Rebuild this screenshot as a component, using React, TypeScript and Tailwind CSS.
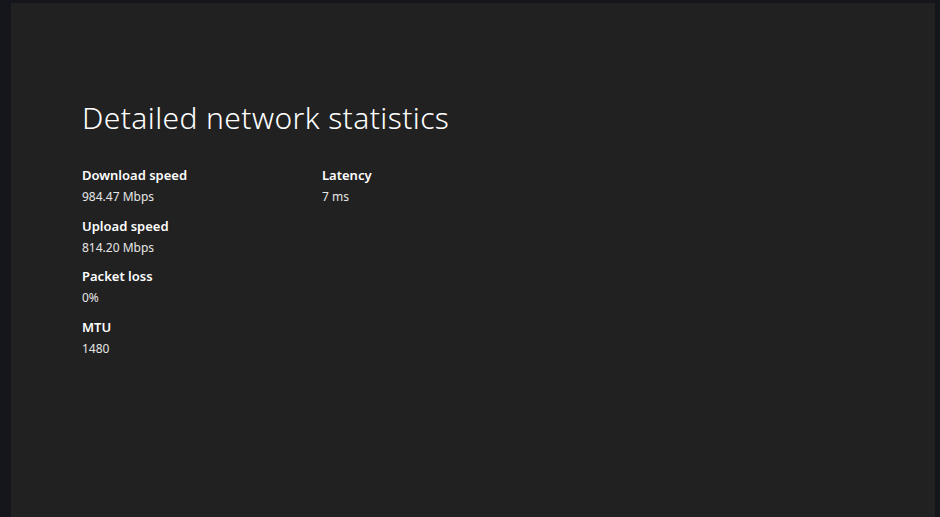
import React from "react";

interface Stat {
  label: string;
  value: string;
}

const left: Stat[] = [
  { label: "Download speed", value: "984.47 Mbps" },
  { label: "Upload speed", value: "814.20 Mbps" },
  { label: "Packet loss", value: "0%" },
  { label: "MTU", value: "1480" },
];

const right: Stat[] = [{ label: "Latency", value: "7 ms" }];

function StatItem({ stat }: { stat: Stat }) {
  return (
    <div className="flex flex-col h-[50.67px]">
      <div className="text-[13px] font-semibold leading-[20px] text-white">{stat.label}</div>
      <div className="text-[12px] leading-[20px] text-[#e6e6e6] mt-[2px]">{stat.value}</div>
    </div>
  );
}

export default function App() {
  return (
    <div className="w-[940px] h-[517px] bg-[#15161b] pl-[11px] pr-[5px] pt-[3px] overflow-hidden font-['Noto_Sans',sans-serif]">
      <div className="h-full bg-[#212121] pl-[71px] pt-[93px]">
        <h1 className="text-[30px] font-light leading-[44px] text-white tracking-[0.4px]">
          Detailed network statistics
        </h1>
        <div className="flex mt-[25px]">
          <div className="w-[240px] flex flex-col">
            {left.map((s) => (
              <StatItem key={s.label} stat={s} />
            ))}
          </div>
          <div className="flex flex-col">
            {right.map((s) => (
              <StatItem key={s.label} stat={s} />
            ))}
          </div>
        </div>
      </div>
    </div>
  );
}
